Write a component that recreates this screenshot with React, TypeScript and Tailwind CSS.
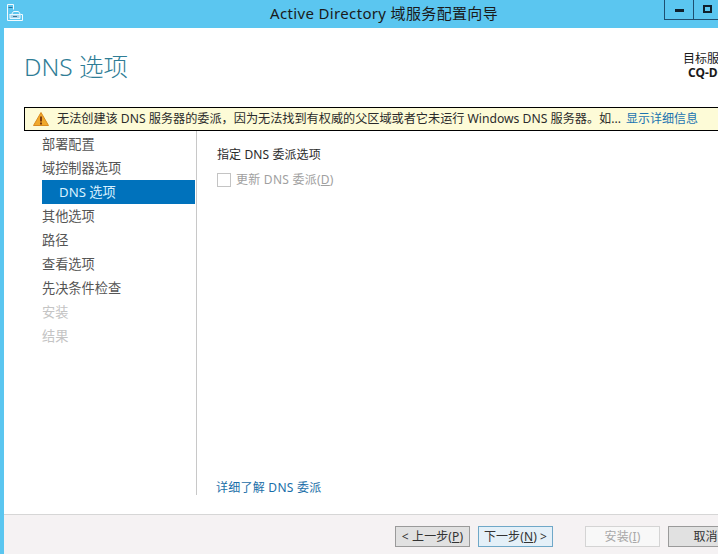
const font = { fontFamily: '"Noto Sans", "Noto Sans CJK SC", sans-serif' };

const steps = [
  { label: '部署配置' },
  { label: '域控制器选项' },
  { label: 'DNS 选项', active: true },
  { label: '其他选项' },
  { label: '路径' },
  { label: '查看选项' },
  { label: '先决条件检查' },
  { label: '安装', disabled: true },
  { label: '结果', disabled: true },
];

function AppIcon() {
  return (
    <svg width="18" height="18" viewBox="0 0 18 18" fill="none" stroke="#f2fbff" strokeWidth="1">
      <path d="M1.5 16.5V.5h6v5" />
      <path d="M2.5 3.5h4" stroke="#2f6f96" />
      <path d="M1.5 16.5h15v-6h-2l-2-3h-5l-2 3h-2" />
      <path d="M4 10.5h10v4H4z" fill="#9fd4ee" stroke="#e8f7ff" />
      <path d="M7 12.5h4" stroke="#47708a" />
    </svg>
  );
}

function WarningIcon() {
  return (
    <svg width="16" height="14" viewBox="0 0 16 14" className="shrink-0">
      <path d="M8 .5 15.5 13.5H.5z" fill="#f0a92c" stroke="#d98a1e" strokeWidth="1" />
      <rect x="7" y="4.5" width="2" height="5" fill="#7a3b10" />
      <rect x="7" y="10.5" width="2" height="2" fill="#7a3b10" />
    </svg>
  );
}

function Button({ children, className }: { children: React.ReactNode; className: string }) {
  return (
    <button className={`w-[75px] h-[21px] shrink-0 border text-[12px] tracking-[0.1px] flex items-center justify-center ${className}`}>
      {children}
    </button>
  );
}

export default function App() {
  return (
    <div className="w-[718px] h-[554px] overflow-hidden flex flex-col bg-[#5bc6f0] text-[#333333]" style={font}>
      <div className="h-[28px] shrink-0 flex relative">
        <div className="pl-[6px] pt-[4px]">
          <AppIcon />
        </div>
        <div className="flex-1 pl-[246px] pt-[3px] text-[15px] leading-[21px] tracking-[0.35px] text-[#1a1a1a] whitespace-nowrap">
          Active Directory 域服务配置向导
        </div>
        <div className="absolute left-[664px] top-0 flex w-[80px] h-[20px] border border-t-0 border-[#1e4f70]">
          <div className="w-[29px] border-r border-[#1e4f70] flex items-center justify-center">
            <div className="w-[9px] h-[3px] bg-[#10202c] mt-[2px]" />
          </div>
          <div className="flex-1 flex pl-[9px] pt-[5px]">
            <div className="w-[9px] h-[8px] border-2 border-[#10202c]" />
          </div>
        </div>
      </div>

      <div className="flex-1 min-h-0 ml-[4px] flex flex-col bg-white">
        <div className="h-[79px] shrink-0 flex justify-between">
          <h1 className="pl-[20px] pt-[21px] text-[24.5px] leading-[36px] font-light text-[#2f7d96]">DNS 选项</h1>
          <div className="w-[35px] pt-[24px] text-[12px] leading-[14px] whitespace-nowrap text-[#1a1a1a] overflow-hidden">
            <div className="overflow-hidden">目标服务器</div>
            <div className="pl-[5px] font-bold overflow-hidden">CQ-DC</div>
          </div>
        </div>

        <div className="h-[24px] shrink-0 w-[720px] ml-[20px] border border-black bg-[#fdfbd7] flex items-center pl-[8px] text-[12.15px] whitespace-nowrap text-[#2b2b2b]">
          <WarningIcon />
          <span className="ml-[8px]">无法创建该 DNS 服务器的委派，因为无法找到有权威的父区域或者它未运行 Windows DNS 服务器。如...</span>
          <span className="ml-[5px] text-[12px] text-[#1a73b0]">显示详细信息</span>
        </div>

        <div className="h-[364px] shrink-0 flex">
          <nav className="w-[193px] shrink-0 border-r border-[#c8c8c8] pl-[38px] pt-px">
            {steps.map((step) => (
              <div
                key={step.label}
                className={`h-[24px] text-[13.2px] leading-[24px] ${
                  step.active
                    ? 'bg-[#0072bc] text-[#d8f0ff] pl-[17px] mr-px'
                    : step.disabled
                      ? 'text-[#c4c4c4]'
                      : 'text-[#555555]'
                }`}
              >
                {step.label}
              </div>
            ))}
          </nav>
          <div className="flex-1 flex flex-col pl-[20px] pt-[15px]">
            <div className="text-[12px] leading-[18px] tracking-[0.1px] text-[#2b2b2b]">指定 DNS 委派选项</div>
            <label className="mt-[7px] flex items-center text-[12px] leading-[18px] tracking-[0.25px] text-[#a0a0a0]">
              <span className="w-[14px] h-[14px] shrink-0 border border-[#c4c4c4] mr-[5px]" />
              <span>
                更新 DNS 委派(<span className="underline">D</span>)
              </span>
            </label>
            <a className="mt-auto -mb-px -ml-px text-[12px] leading-[16px] tracking-[0.25px] text-[#1a6ea8]">详细了解 DNS 委派</a>
          </div>
        </div>

        <div className="h-[19px] shrink-0" />

        <div className="flex-1 border-t border-[#d6d6d6] bg-[#f5f2f3] flex pl-[391px] pt-[11px] gap-[8px]">
          <Button className="bg-[#e1e1e1] border-[#9a9a9a] text-[#333333]">
            &lt; 上一步(<span className="underline">P</span>)
          </Button>
          <Button className="bg-[#e4f0f8] border-[#6fa8c8] text-[#333333]">
            下一步(<span className="underline">N</span>) &gt;
          </Button>
          <Button className="ml-[24px] bg-[#f8f8f8] border-[#d4d4d4] text-[#a8a8a8]">
            安装(<span className="underline">I</span>)
          </Button>
          <Button className="bg-[#e1e1e1] border-[#9a9a9a] text-[#333333]">取消</Button>
        </div>
      </div>
    </div>
  );
}
